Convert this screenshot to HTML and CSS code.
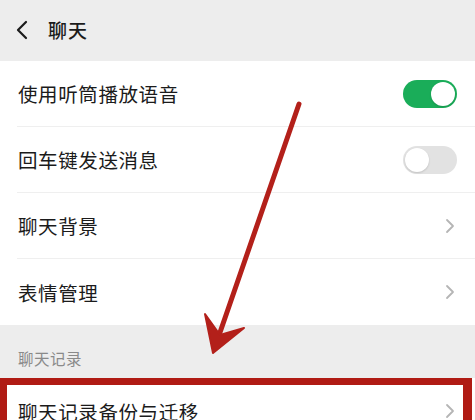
FILE: index.html
```html
<!DOCTYPE html>
<html lang="zh">
<head>
<meta charset="utf-8">
<title>聊天</title>
<link rel="stylesheet" href="styles.css">
</head>
<body>
<div class="screen">
  <header class="topbar">
    <svg class="back" width="14" height="20" viewBox="0 0 14 20"><path d="M11 2 L3 10 L11 18" fill="none" stroke="#1a1a1a" stroke-width="2.2" stroke-linecap="round" stroke-linejoin="round"/></svg>
    <span class="title">聊天</span>
  </header>
  <section class="group">
    <div class="row"><span class="label">使用听筒播放语音</span><span class="toggle on"><span class="knob"></span></span></div>
    <div class="row"><span class="label">回车键发送消息</span><span class="toggle off"><span class="knob"></span></span></div>
    <div class="row"><span class="label">聊天背景</span><svg class="chev" width="10" height="16" viewBox="0 0 10 16"><path d="M2 2 L8 8 L2 14" fill="none" stroke="#b5b5b5" stroke-width="1.8" stroke-linecap="round" stroke-linejoin="round"/></svg></div>
    <div class="row"><span class="label">表情管理</span><svg class="chev" width="10" height="16" viewBox="0 0 10 16"><path d="M2 2 L8 8 L2 14" fill="none" stroke="#b5b5b5" stroke-width="1.8" stroke-linecap="round" stroke-linejoin="round"/></svg></div>
  </section>
  <div class="section-title">聊天记录</div>
  <section class="group">
    <div class="row"><span class="label">聊天记录备份与迁移</span><svg class="chev" width="10" height="16" viewBox="0 0 10 16"><path d="M2 2 L8 8 L2 14" fill="none" stroke="#b5b5b5" stroke-width="1.8" stroke-linecap="round" stroke-linejoin="round"/></svg></div>
  </section>
  <div class="highlight"></div>
  <svg class="arrow" width="475" height="420" viewBox="0 0 475 420">
    <g fill="none" stroke="#b3201a" stroke-width="5" stroke-linecap="round" stroke-linejoin="round">
      <path d="M299 104 L216 344"/>
    </g>
    <path d="M205 314 L213 353 L244 328 L220 335 Z" fill="#b3201a" stroke="#b3201a" stroke-width="2" stroke-linejoin="round"/>
  </svg>
</div>
</body>
</html>
```

FILE: styles.css
```css
html, body {
  margin: 0;
  padding: 0;
  background: #ededed;
}
body {
  font-family: "Noto Sans CJK SC", "Noto Sans", sans-serif;
  color: #1b1b1b;
}
.screen {
  position: relative;
  width: 475px;
  height: 420px;
  overflow: hidden;
  background: #ededed;
}
.topbar {
  height: 61px;
  display: flex;
  align-items: center;
  padding-left: 15px;
  box-sizing: border-box;
}
.back {
  margin-right: 19px;
  margin-top: -2px;
}
.title {
  font-size: 19px;
  font-weight: 500;
  margin-top: -2px;
  letter-spacing: 1px;
}
.group {
  background: #fff;
}
.row {
  height: 66px;
  margin-left: 17px;
  padding-right: 18px;
  display: flex;
  align-items: center;
  justify-content: space-between;
  border-bottom: 1px solid #efefef;
  box-sizing: border-box;
}
.row:last-child {
  border-bottom: none;
}
.label {
  font-size: 19.5px;
  letter-spacing: 0.6px;
  margin-left: 1px;
}
.toggle {
  position: relative;
  width: 54px;
  height: 28px;
  border-radius: 14px;
  box-sizing: border-box;
}
.toggle.on {
  background: #1aad59;
}
.toggle.off {
  background: #e2e2e2;
}
.knob {
  position: absolute;
  top: 2px;
  width: 24px;
  height: 24px;
  border-radius: 50%;
  background: #fff;
  box-shadow: 0 1px 2px rgba(0,0,0,0.15);
}
.toggle.on .knob {
  right: 2px;
}
.toggle.off .knob {
  left: 2px;
}
.chev {
  margin-right: 2px;
}
.section-title {
  height: 53px;
  box-sizing: border-box;
  padding: 22px 0 0 18px;
  font-size: 15.5px;
  color: #8a8a8a;
  letter-spacing: 0.5px;
}
.highlight {
  position: absolute;
  left: 0;
  top: 378px;
  width: 472px;
  height: 80px;
  border: 7px solid #b01b14;
  border-left-width: 7px;
  border-right-width: 9px;
  box-sizing: border-box;
}
.arrow {
  position: absolute;
  left: 0;
  top: 0;
}
```
